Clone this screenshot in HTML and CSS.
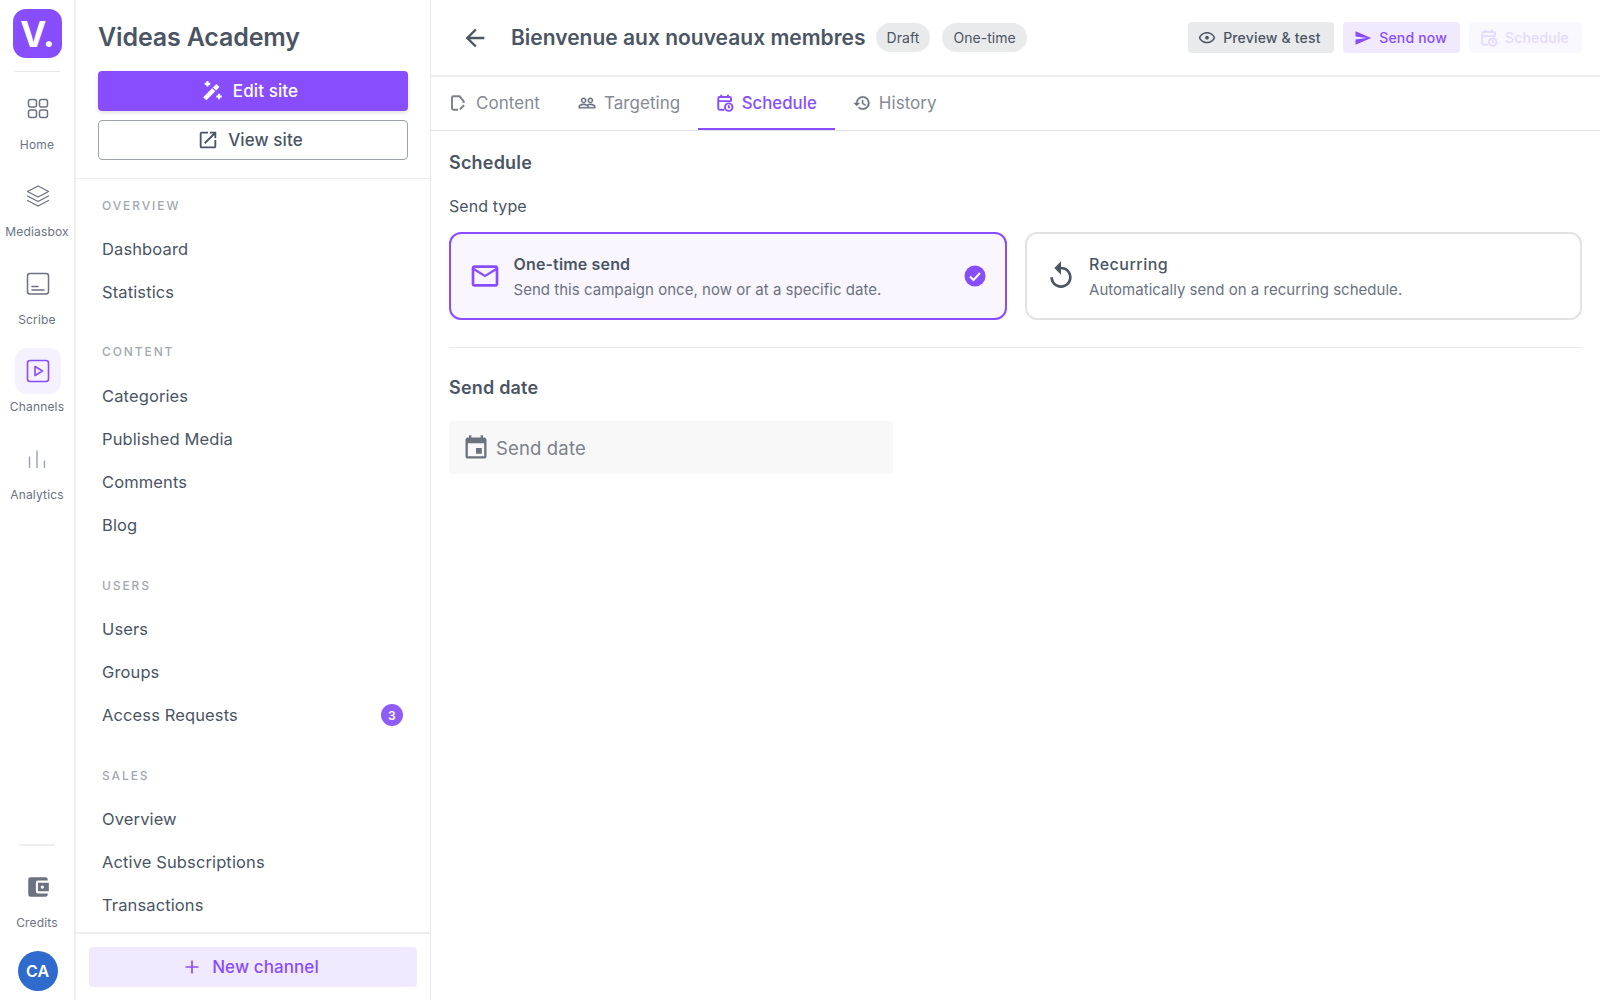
FILE: index.html
```html
<!DOCTYPE html>
<html lang="en">
<head>
    <meta charset="UTF-8">
    <meta name="viewport" content="width=device-width, initial-scale=1.0">
    <title>Bienvenue aux nouveaux membres</title>
    <link rel="stylesheet" href="styles.css">
</head>
<body>
    <div class="app">
        <nav class="rail">
            <div class="logo">V.</div>
            <div class="rail-divider"></div>
            <a class="rail-item">
                <span class="rail-icon"><svg width="26" height="26" viewBox="0 0 26 26" fill="none" stroke="#6b7280" stroke-width="1.5"><rect x="3.5" y="3.5" width="8" height="7.5" rx="2"/><rect x="14.5" y="3.5" width="8" height="7.5" rx="2"/><rect x="3.5" y="14" width="8" height="7.5" rx="2"/><rect x="14.5" y="14" width="8" height="7.5" rx="2"/></svg></span>
                <span>Home</span>
            </a>
            <a class="rail-item">
                <span class="rail-icon"><svg width="26" height="26" viewBox="0 0 26 26" fill="none" stroke="#6b7280" stroke-width="1.3" stroke-linejoin="round" stroke-linecap="round"><path d="M13 3l10.5 5.5L13 14 2.500 8.500z"/><path d="M2.500 13L13 18.500 23.500 13"/><path d="M2.500 17.500L13 23l10.500-5.500"/></svg></span>
                <span>Mediasbox</span>
            </a>
            <a class="rail-item">
                <span class="rail-icon"><svg width="26" height="26" viewBox="0 0 26 26" fill="none" stroke="#6b7280" stroke-width="1.5" stroke-linecap="round"><rect x="2.500" y="2.500" width="21" height="20.500" rx="2.500"/><path d="M7 15.500h6M7 19h12"/></svg></span>
                <span>Scribe</span>
            </a>
            <a class="rail-item active">
                <span class="rail-icon"><svg width="26" height="26" viewBox="0 0 26 26" fill="none" stroke="#884dff" stroke-width="1.600" stroke-linejoin="round"><rect x="2.500" y="2.500" width="21" height="21" rx="2.500"/><path d="M10 8.500l7.500 4.500-7.500 4.500z"/></svg></span>
                <span>Channels</span>
            </a>
            <a class="rail-item">
                <span class="rail-icon"><svg class="bars" width="26" height="26" viewBox="0 0 26 26" fill="none" stroke="#9ca3af" stroke-width="1.400"><path d="M5.500 11.500V23M13 5.500V23M20.500 15.500V23"/></svg></span>
                <span>Analytics</span>
            </a>
            <div class="rail-bottom">
                <div class="rail-divider short"></div>
                <a class="rail-item credits">
                    <span class="rail-icon"><svg width="26" height="26" viewBox="0 0 24 24" fill="#6b7280"><path d="M21 18v1a2 2 0 0 1-2 2H5a2 2 0 0 1-2-2V5a2 2 0 0 1 2-2h14a2 2 0 0 1 2 2v1h-9a2 2 0 0 0-2 2v8a2 2 0 0 0 2 2h9zm-9-2h10V8H12v8zm4-2.500a1.500 1.500 0 1 1 0-3 1.500 1.500 0 0 1 0 3z"/></svg></span>
                    <span>Credits</span>
                </a>
                <div class="avatar">CA</div>
            </div>
        </nav>

        <aside class="sidebar">
            <div class="site-head">
                <h1>Videas Academy</h1>
                <button class="btn-edit"><svg width="22" height="22" viewBox="0 0 20 20" fill="none" stroke="#fff"><path d="M2.500 17L14.500 5" stroke-width="4"/><path d="M9.500 7l3.500 3.500" stroke="#884dff" stroke-width="1"/><path d="M5 1v5M2.500 3.500h5M15.500 12.500v5M13 15h5" stroke-width="1.900"/></svg>Edit site</button>
                <button class="btn-view"><svg width="22" height="22" viewBox="0 0 24 24" fill="#4b5563"><path d="M19 19H5V5h7V3H5a2 2 0 0 0-2 2v14a2 2 0 0 0 2 2h14c1.100 0 2-.9 2-2v-7h-2v7zM14 3v2h3.590l-9.830 9.830 1.410 1.410L19 6.410V10h2V3h-7z"/></svg>View site</button>
            </div>
            <div class="menu">
                <div class="menu-title first">OVERVIEW</div>
                <a class="menu-item">Dashboard</a>
                <a class="menu-item">Statistics</a>
                <div class="menu-title">CONTENT</div>
                <a class="menu-item">Categories</a>
                <a class="menu-item">Published Media</a>
                <a class="menu-item">Comments</a>
                <a class="menu-item">Blog</a>
                <div class="menu-title">USERS</div>
                <a class="menu-item">Users</a>
                <a class="menu-item">Groups</a>
                <a class="menu-item">Access Requests<span class="count">3</span></a>
                <div class="menu-title">SALES</div>
                <a class="menu-item">Overview</a>
                <a class="menu-item">Active Subscriptions</a>
                <a class="menu-item">Transactions</a>
            </div>
            <div class="sidebar-foot">
                <button class="btn-new"><svg width="18" height="18" viewBox="0 0 18 18" stroke="#884dff" stroke-width="1.700"><path d="M9 2.500v13M2.500 9h13"/></svg>New channel</button>
            </div>
        </aside>

        <main class="main">
            <header class="topbar">
                <svg class="back" width="24" height="24" viewBox="0 0 24 24" fill="#4b5563"><path d="M20 11H7.830l5.590-5.590L12 4l-8 8 8 8 1.410-1.410L7.830 13H20v-2z"/></svg>
                <h2>Bienvenue aux nouveaux membres</h2>
                <span class="chip">Draft</span>
                <span class="chip">One-time</span>
                <div class="actions">
                    <button class="act act-grey"><svg width="18" height="18" viewBox="0 0 24 24" fill="#4b5563"><path d="M12 6a9.770 9.770 0 0 1 8.820 5.500A9.770 9.770 0 0 1 12 17a9.770 9.770 0 0 1-8.820-5.500A9.770 9.770 0 0 1 12 6m0-2C7 4 2.730 7.110 1 11.500 2.730 15.890 7 19 12 19s9.270-3.110 11-7.500C21.270 7.110 17 4 12 4zm0 5a2.500 2.500 0 1 1 0 5 2.500 2.500 0 0 1 0-5z"/></svg>Preview &amp; test</button>
                    <button class="act act-purple"><svg width="18" height="18" viewBox="0 0 24 24" fill="#884dff"><path d="M2.010 21L23 12 2.010 3 2 10l15 2-15 2z"/></svg>Send now</button>
                    <button class="act act-disabled"><svg width="18" height="18" viewBox="0 0 24 24" fill="none" stroke="#e4d9ff" stroke-width="2.600"><path d="M7 1v4M16 1v4M11 21H5a2 2 0 0 1-2-2V6a2 2 0 0 1 2-2h13a2 2 0 0 1 2 2v4M3 9.500h17"/><circle cx="17" cy="17.500" r="5"/><path d="M17 15v2.500l1.500 1"/></svg>Schedule</button>
                </div>
            </header>

            <div class="tabs">
                <a class="tab"><svg width="18" height="18" viewBox="0 0 24 24" fill="none" stroke="#7b808a" stroke-width="2.600" stroke-linejoin="round"><path d="M12 21H6a2 2 0 0 1-2-2V5a2 2 0 0 1 2-2h8l5.500 6.500V12"/><path d="M14.500 20.500l5.500-5.500"/></svg>Content</a>
                <a class="tab"><svg width="18" height="18" viewBox="0 0 24 24" fill="#6b7280" stroke="#6b7280" stroke-width=".6"><path d="M16.500 13c-1.200 0-3.070.34-4.500 1-1.430-.67-3.300-1-4.500-1C5.330 13 1 14.080 1 16.250V19h22v-2.750c0-2.170-4.330-3.250-6.500-3.250zm-4 4.500h-10v-1.250c0-.54 2.560-1.750 5-1.750s5 1.210 5 1.750v1.250zm9 0H14v-1.250c0-.46-.2-.86-.52-1.220.88-.3 1.960-.53 3.020-.53 2.440 0 5 1.210 5 1.750v1.250zM7.500 12c1.930 0 3.500-1.570 3.500-3.500S9.430 5 7.500 5 4 6.570 4 8.500 5.570 12 7.500 12zm0-5.500c1.100 0 2 .9 2 2s-.9 2-2 2-2-.9-2-2 .9-2 2-2zm9 5.500c1.930 0 3.500-1.570 3.500-3.500S18.430 5 16.500 5 13 6.570 13 8.500s1.570 3.500 3.500 3.500zm0-5.500c1.100 0 2 .9 2 2s-.9 2-2 2-2-.9-2-2 .9-2 2-2z"/></svg>Targeting</a>
                <a class="tab active"><svg width="18" height="18" viewBox="0 0 24 24" fill="none" stroke="#884dff" stroke-width="2.600"><path d="M7 1v4M16 1v4M11 21H5a2 2 0 0 1-2-2V6a2 2 0 0 1 2-2h13a2 2 0 0 1 2 2v4M3 9.500h17"/><circle cx="17" cy="17.500" r="5"/><path d="M17 15v2.500l1.500 1"/></svg>Schedule</a>
                <a class="tab"><svg width="18" height="18" viewBox="0 0 24 24" fill="#6b7280" stroke="#6b7280" stroke-width=".5"><path d="M13 3a9 9 0 0 0-9 9H1l3.890 3.890.07.14L9 12H6c0-3.870 3.130-7 7-7s7 3.130 7 7-3.130 7-7 7c-1.930 0-3.680-.79-4.940-2.060l-1.420 1.420A8.954 8.954 0 0 0 13 21a9 9 0 0 0 0-18zm-1 5v5l4.280 2.540.72-1.210-3.500-2.080V8H12z"/></svg>History</a>
            </div>

            <section class="content">
                <h3>Schedule</h3>
                <div class="field-label">Send type</div>
                <div class="type-cards">
                    <div class="type-card selected">
                        <svg width="32" height="32" viewBox="0 0 24 24" fill="#884dff"><path d="M22 6c0-1.100-.9-2-2-2H4c-1.100 0-2 .9-2 2v12c0 1.100.9 2 2 2h16c1.100 0 2-.9 2-2V6zm-2 0l-8 5-8-5h16zm0 12H4V8l8 5 8-5v10z"/></svg>
                        <div class="type-text">
                            <strong>One-time send</strong>
                            <span>Send this campaign once, now or at a specific date.</span>
                        </div>
                        <svg class="check" width="24" height="24" viewBox="0 0 24 24"><circle cx="12" cy="12" r="10.500" fill="#884dff"/><path d="M7 12.500l3.500 3.500 6.500-7" fill="none" stroke="#fff" stroke-width="2"/></svg>
                    </div>
                    <div class="type-card">
                        <svg width="32" height="32" viewBox="0 0 24 24" fill="#4b5563"><path d="M12 5V1L7 6l5 5V7c3.310 0 6 2.690 6 6s-2.690 6-6 6-6-2.690-6-6H4c0 4.420 3.580 8 8 8s8-3.580 8-8-3.580-8-8-8z"/></svg>
                        <div class="type-text">
                            <strong>Recurring</strong>
                            <span>Automatically send on a recurring schedule.</span>
                        </div>
                    </div>
                </div>
                <hr class="rule">
                <h3 class="date-title">Send date</h3>
                <div class="date-input">
                    <svg width="28" height="28" viewBox="0 0 24 24" fill="#6b7280"><path d="M17 12h-5v5h5v-5zM16 1v2H8V1H6v2H5c-1.110 0-2 .9-2 2v14c0 1.100.89 2 2 2h14c1.100 0 2-.9 2-2V5c0-1.100-.9-2-2-2h-1V1h-2zm3 18H5V8h14v11z"/></svg>
                    <span>Send date</span>
                </div>
            </section>
        </main>
    </div>
</body>
</html>
```

FILE: styles.css
```css
* {
    box-sizing: border-box;
}
html, body {
    margin: 0;
    height: 100%;
}
body {
    font-family: Inter, 'Noto Sans', sans-serif;
    color: #4b5563;
    background: #fff;
    overflow: hidden;
}
button {
    font-family: inherit;
    border: none;
    cursor: pointer;
}
h1, h2, h3 {
    margin: 0;
}
.app {
    display: flex;
    height: 1000px;
}

/* icon rail */
.rail {
    width: 76px;
    flex: none;
    border-right: 2px solid #eeeeee;
    display: flex;
    flex-direction: column;
    align-items: center;
    padding-top: 9px;
}
.logo {
    width: 49px;
    height: 49px;
    margin-left: 1px;
    border-radius: 13px;
    background: #884dff;
    color: #fff;
    font-size: 35px;
    font-weight: 700;
    display: flex;
    align-items: center;
    justify-content: center;
}
.rail-divider {
    width: 45px;
    height: 1px;
    background: #e5e7eb;
    margin: 13px 0 3px;
}
.rail-divider.short {
    width: 36px;
    height: 2px;
    background: #eeeeee;
    margin: 0 0 3px;
}
.rail-item {
    width: 74px;
    height: 87.4px;
    display: flex;
    flex-direction: column;
    align-items: center;
    padding-top: 11px;
    font-size: 12px;
    letter-spacing: 0.18px;
    color: #6b7280;
}
.rail-icon {
    width: 46px;
    height: 46px;
    border-radius: 12px;
    display: flex;
    align-items: center;
    justify-content: center;
    margin-left: 2px;
    margin-bottom: 5px;
}
.rail-icon .bars {
    margin-top: -2px;
    margin-left: -2px;
}
.rail-item.active .rail-icon {
    background: #f5f1ff;
}
.rail-bottom {
    margin-top: auto;
    display: flex;
    flex-direction: column;
    align-items: center;
    padding-bottom: 9px;
}
.rail-item.credits {
    height: 102px;
    padding-top: 15px;
}
.avatar {
    width: 40px;
    height: 40px;
    border-radius: 50%;
    background: #2f6bcc;
    color: #fff;
    font-size: 16px;
    font-weight: 600;
    display: flex;
    align-items: center;
    justify-content: center;
    margin-left: 1px;
}

/* site sidebar */
.sidebar {
    width: 355px;
    flex: none;
    border-right: 1px solid #e9eaec;
    display: flex;
    flex-direction: column;
}
.site-head {
    padding: 19.5px 22px 18px 22px;
    border-bottom: 1px solid #eeeeee;
    display: flex;
    flex-direction: column;
}
.site-head h1 {
    font-size: 25px;
    line-height: 34px;
    font-weight: 600;
    letter-spacing: -0.15px;
    margin-bottom: 17.5px;
}
.btn-edit, .btn-view, .btn-new {
    height: 40px;
    border-radius: 4px;
    font-size: 17px;
    font-weight: 500;
    letter-spacing: 0.1px;
    display: flex;
    align-items: center;
    justify-content: center;
    gap: 9px;
    padding: 0 6px 0 0;
}
.btn-edit {
    background: #884dff;
    color: #fff;
    box-shadow: 0 2px 4px rgba(0, 0, 0, 0.12);
    margin-bottom: 9px;
}
.btn-view {
    background: #fff;
    color: #4b5563;
    border: 1px solid #9ca3af;
}
.menu {
    flex: 1;
    overflow: hidden;
    padding: 0 27px 0 26px;
}
.menu-title {
    font-size: 12px;
    font-weight: 500;
    letter-spacing: 1.9px;
    color: #a3a8b0;
    line-height: 16px;
    margin-top: 31px;
    margin-bottom: 13.800px;
}
.menu-title.first {
    margin-top: 18.5px;
}
.menu-item {
    display: flex;
    align-items: center;
    justify-content: space-between;
    height: 43.1px;
    font-size: 16.5px;
    letter-spacing: 0.12px;
    color: #4b5563;
}
.count {
    width: 22px;
    height: 22px;
    border-radius: 50%;
    background: #8f5cf6;
    color: #fff;
    font-size: 12px;
    font-weight: 600;
    display: flex;
    align-items: center;
    justify-content: center;
}
.sidebar-foot {
    border-top: 2px solid #eeeeee;
    padding: 13px 13px;
    height: 68px;
}
.btn-new {
    width: 100%;
    background: #f1eafe;
    color: #884dff;
    gap: 11px;
    padding: 0 4px 0 0;
}

/* main */
.main {
    flex: 1;
    min-width: 0;
    display: flex;
    flex-direction: column;
}
.topbar {
    height: 77px;
    flex: none;
    border-bottom: 2px solid #eeeeee;
    display: flex;
    align-items: center;
    padding: 0 18px 0 30px;
}
.back {
    width: 28px;
    height: 28px;
    margin-right: 22px;
}
.topbar h2 {
    font-size: 21px;
    font-weight: 600;
    letter-spacing: 0;
    margin-right: 10px;
}
.chip {
    height: 29px;
    border-radius: 15px;
    background: #e9eaec;
    font-size: 14px;
    letter-spacing: 0.06px;
    padding: 0 11px;
    display: flex;
    align-items: center;
    margin-right: 12px;
}
.actions {
    margin-left: auto;
    display: flex;
    gap: 9px;
}
.act {
    height: 31px;
    border-radius: 4px;
    padding: 0 13px 0 10px;
    font-size: 14px;
    font-weight: 500;
    letter-spacing: 0.18px;
    display: flex;
    align-items: center;
    gap: 7px;
}
.act-grey {
    background: #e9eaec;
    color: #4b5563;
}
.act-purple {
    background: #f1eafe;
    color: #884dff;
    padding-left: 11.5px;
}
.act-disabled {
    background: #faf8ff;
    color: #e4d9ff;
    padding-left: 11px;
}
.tabs {
    height: 54px;
    flex: none;
    border-bottom: 1px solid #e0e2e5;
    display: flex;
}
.tab {
    height: 53px;
    padding: 0 18px;
    display: flex;
    align-items: center;
    gap: 8px;
    font-size: 17px;
    letter-spacing: 0.05px;
    color: #858a93;
    border-bottom: 2px solid transparent;
}
.tab:first-child {
    gap: 9px;
    padding-right: 20px;
}
.tab.active {
    color: #884dff;
    font-size: 16.8px;
    font-weight: 500;
    letter-spacing: 0;
    gap: 7.5px;
    border-bottom-color: #884dff;
}
.content {
    padding: 20px 18px 0;
}
.content h3 {
    font-size: 18px;
    line-height: 24px;
    font-weight: 600;
    letter-spacing: 0.2px;
}
.field-label {
    font-size: 16px;
    line-height: 22px;
    letter-spacing: 0.08px;
    margin-top: 20px;
    margin-bottom: 15px;
}
.type-cards {
    display: flex;
    gap: 18px;
}
.type-card {
    flex: 1;
    height: 88px;
    border: 2px solid #e1e3e6;
    border-radius: 12px;
    padding: 0 18px;
    display: flex;
    align-items: center;
    gap: 12.5px;
}
.type-card.selected {
    border-color: #884dff;
    background: #f9f6ff;
}
.type-text {
    flex: 1;
    display: flex;
    flex-direction: column;
    gap: 4px;
    padding-top: 2px;
}
.type-text strong {
    font-size: 16px;
    line-height: 21px;
    font-weight: 500;
    letter-spacing: 0.5px;
}
.selected .type-text strong {
    font-weight: 600;
    letter-spacing: 0.15px;
}
.type-text span {
    font-size: 15px;
    line-height: 21px;
    letter-spacing: 0.03px;
    color: #6b7280;
}
.rule {
    border: none;
    border-top: 1px solid #e9eaec;
    margin: 27px 0 27.5px;
}
.date-input {
    width: 444px;
    height: 53px;
    margin-top: 21.5px;
    background: #f8f8f8;
    border-radius: 4px;
    padding: 0 13px;
    display: flex;
    align-items: center;
    gap: 6px;
    font-size: 18.5px;
    letter-spacing: 0.15px;
    color: #7b808a;
}
```
